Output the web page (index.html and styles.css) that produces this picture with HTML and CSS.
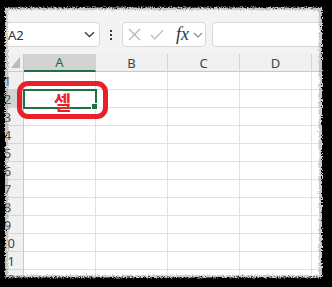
FILE: index.html
```html
<!DOCTYPE html>
<html lang="ko">
<head>
    <meta charset="UTF-8">
    <meta name="viewport" content="width=device-width, initial-scale=1.0">
    <title>셀 - Excel</title>
    <link rel="stylesheet" href="styles.css">
</head>
<body>
    <div class="app">
        <div class="formula-bar">
            <div class="name-box">
                <span class="name">A2</span>
                <svg class="chevron" width="11" height="7" viewBox="0 0 11 7"><path d="M1 1.2 5.5 5.5 10 1.2" fill="none" stroke="#3a3a3a" stroke-width="1.3"/></svg>
            </div>
            <div class="grip"><i></i><i></i><i></i></div>
            <div class="fx-box">
                <svg class="btn-cancel" width="13" height="13" viewBox="0 0 13 13"><path d="M1 1 12 12M12 1 1 12" fill="none" stroke="#b4b4b4" stroke-width="1.2"/></svg>
                <svg class="btn-enter" width="14" height="11" viewBox="0 0 14 11"><path d="M1 6 4.8 9.8 13 1.2" fill="none" stroke="#b4b4b4" stroke-width="1.2"/></svg>
                <span class="fx">fx</span>
                <svg class="chevron small" width="10" height="6" viewBox="0 0 10 6"><path d="M1 1 5 5 9 1" fill="none" stroke="#8a8a8a" stroke-width="1.1"/></svg>
            </div>
            <div class="formula-input"></div>
        </div>

        <div class="sheet">
            <div class="corner"><span class="select-all"></span></div>
            <div class="col-head selected">A</div>
            <div class="col-head">B</div>
            <div class="col-head">C</div>
            <div class="col-head">D</div>
            <div class="col-head"></div>

            <div class="row-head">1</div>
            <div class="cell"></div><div class="cell"></div><div class="cell"></div><div class="cell"></div><div class="cell"></div>
            <div class="row-head selected">2</div>
            <div class="cell active"></div><div class="cell"></div><div class="cell"></div><div class="cell"></div><div class="cell"></div>
            <div class="row-head">3</div>
            <div class="cell"></div><div class="cell"></div><div class="cell"></div><div class="cell"></div><div class="cell"></div>
            <div class="row-head">4</div>
            <div class="cell"></div><div class="cell"></div><div class="cell"></div><div class="cell"></div><div class="cell"></div>
            <div class="row-head">5</div>
            <div class="cell"></div><div class="cell"></div><div class="cell"></div><div class="cell"></div><div class="cell"></div>
            <div class="row-head">6</div>
            <div class="cell"></div><div class="cell"></div><div class="cell"></div><div class="cell"></div><div class="cell"></div>
            <div class="row-head">7</div>
            <div class="cell"></div><div class="cell"></div><div class="cell"></div><div class="cell"></div><div class="cell"></div>
            <div class="row-head">8</div>
            <div class="cell"></div><div class="cell"></div><div class="cell"></div><div class="cell"></div><div class="cell"></div>
            <div class="row-head">9</div>
            <div class="cell"></div><div class="cell"></div><div class="cell"></div><div class="cell"></div><div class="cell"></div>
            <div class="row-head">10</div>
            <div class="cell"></div><div class="cell"></div><div class="cell"></div><div class="cell"></div><div class="cell"></div>
            <div class="row-head">11</div>
            <div class="cell"></div><div class="cell"></div><div class="cell"></div><div class="cell"></div><div class="cell"></div>
            <div class="row-head">12</div>
            <div class="cell"></div><div class="cell"></div><div class="cell"></div><div class="cell"></div><div class="cell"></div>
        </div>
    </div>

    <!-- 강조 표시 -->
    <div class="callout"><span>셀</span></div>

    <!-- 찢어진 종이 테두리 -->
    <svg class="frame" width="332" height="287" viewBox="0 0 332 287">
        <defs>
            <filter id="rough" x="-10%" y="-10%" width="120%" height="120%">
                <feTurbulence type="fractalNoise" baseFrequency="0.8" numOctaves="2" seed="3" result="noise"/>
                <feDisplacementMap in="SourceGraphic" in2="noise" scale="5" xChannelSelector="R" yChannelSelector="G"/>
            </filter>
        </defs>
        <path class="frame-shade" fill-rule="evenodd" filter="url(#rough)" d="M-20 -20H352V307H-20Z M8 10H319V275H8Z"/>
        <path class="frame-edge" fill-rule="evenodd" filter="url(#rough)" d="M-20 -20H352V307H-20Z M5 7.5H322V277.5H5Z"/>
    </svg>
</body>
</html>
```

FILE: styles.css
```css
* {
    margin: 0;
    padding: 0;
    box-sizing: border-box;
}

body {
    font-family: "Noto Sans", "Noto Sans CJK KR", sans-serif;
    background: #f3f3f3;
    width: 332px;
    height: 287px;
    overflow: hidden;
    position: relative;
    color: #333;
}

.app {
    height: 287px;
    overflow: hidden;
}

/* 수식 입력줄 */
.formula-bar {
    display: flex;
    align-items: center;
    height: 54px;
    padding: 22px 0 7px;
    background: #f3f3f3;
}

.name-box {
    width: 104px;
    height: 25px;
    margin-left: -4px;
    background: #fff;
    border: 1px solid #d9d9d9;
    border-radius: 4px;
    display: flex;
    align-items: center;
    justify-content: space-between;
    padding: 0 4px 0 11px;
    font-size: 13px;
}

.grip {
    width: 22px;
    display: flex;
    flex-direction: column;
    align-items: center;
    gap: 2px;
}

.grip i {
    width: 2px;
    height: 2px;
    background: #3a3a3a;
}

.fx-box {
    width: 84px;
    height: 25px;
    background: #fff;
    border: 1px solid #d9d9d9;
    border-radius: 4px;
    display: flex;
    align-items: center;
    padding-left: 5px;
}

.btn-enter {
    margin-left: 9px;
}

.fx {
    font-family: "Liberation Serif", serif;
    font-style: italic;
    font-size: 18px;
    color: #333;
    margin-left: 12px;
    line-height: 1;
    margin-top: -2px;
}

.chevron.small {
    margin-left: 4px;
}

.formula-input {
    flex: 1;
    height: 25px;
    margin-left: 6px;
    margin-right: -20px;
    background: #fff;
    border: 1px solid #d9d9d9;
    border-radius: 4px;
}

/* 시트 */
.sheet {
    display: grid;
    grid-template-columns: 32px repeat(5, 72px);
    grid-auto-rows: 18px;
    margin-left: -8px;
    background: #fff;
}

.corner,
.col-head,
.row-head {
    background: #f0f0f0;
    font-size: 13px;
    color: #444;
}

.corner {
    position: relative;
    border-right: 1px solid #c9c9c9;
    border-bottom: 1px solid #c9c9c9;
}

.select-all {
    position: absolute;
    right: 3px;
    bottom: 3px;
    width: 0;
    height: 0;
    border-left: 9px solid transparent;
    border-bottom: 11px solid #b9b9b9;
}

.col-head {
    display: flex;
    align-items: center;
    justify-content: center;
    border-right: 1px solid #d4d4d4;
    border-bottom: 1px solid #c9c9c9;
}

.col-head.selected {
    background: #d3d3d3;
    color: #1c6a42;
    border-bottom: 2px solid #1e7145;
}

.row-head {
    display: flex;
    align-items: center;
    justify-content: center;
    border-right: 1px solid #c9c9c9;
    border-bottom: 1px solid #d4d4d4;
    font-size: 13px;
}

.row-head.selected {
    background: #d3d3d3;
    color: #1c6a42;
}

.cell {
    border-right: 1px solid #e1e1e1;
    border-bottom: 1px solid #e1e1e1;
}

.cell.active {
    position: relative;
    z-index: 1;
    outline: 2px solid #1e7145;
    outline-offset: -1px;
}

.cell.active::after {
    content: "";
    position: absolute;
    right: -3px;
    bottom: -3px;
    width: 5px;
    height: 5px;
    background: #1e7145;
    border: 1px solid #fff;
    box-sizing: content-box;
}

/* 강조 표시 */
.callout {
    position: absolute;
    left: 17px;
    top: 81px;
    width: 91px;
    height: 38px;
    border: 5px solid #e8202a;
    border-radius: 11px;
    z-index: 2;
    display: flex;
    justify-content: center;
    padding-top: 3px;
}

.callout span {
    color: #e8202a;
    font-family: "Noto Sans CJK KR", sans-serif;
    font-weight: 700;
    font-size: 19px;
    line-height: 26px;
}

.frame {
    position: absolute;
    left: 0;
    top: 0;
    z-index: 3;
    pointer-events: none;
}

.frame-shade {
    fill: #9a9a9a;
    opacity: 0.5;
}

.frame-edge {
    fill: #000;
}
```
